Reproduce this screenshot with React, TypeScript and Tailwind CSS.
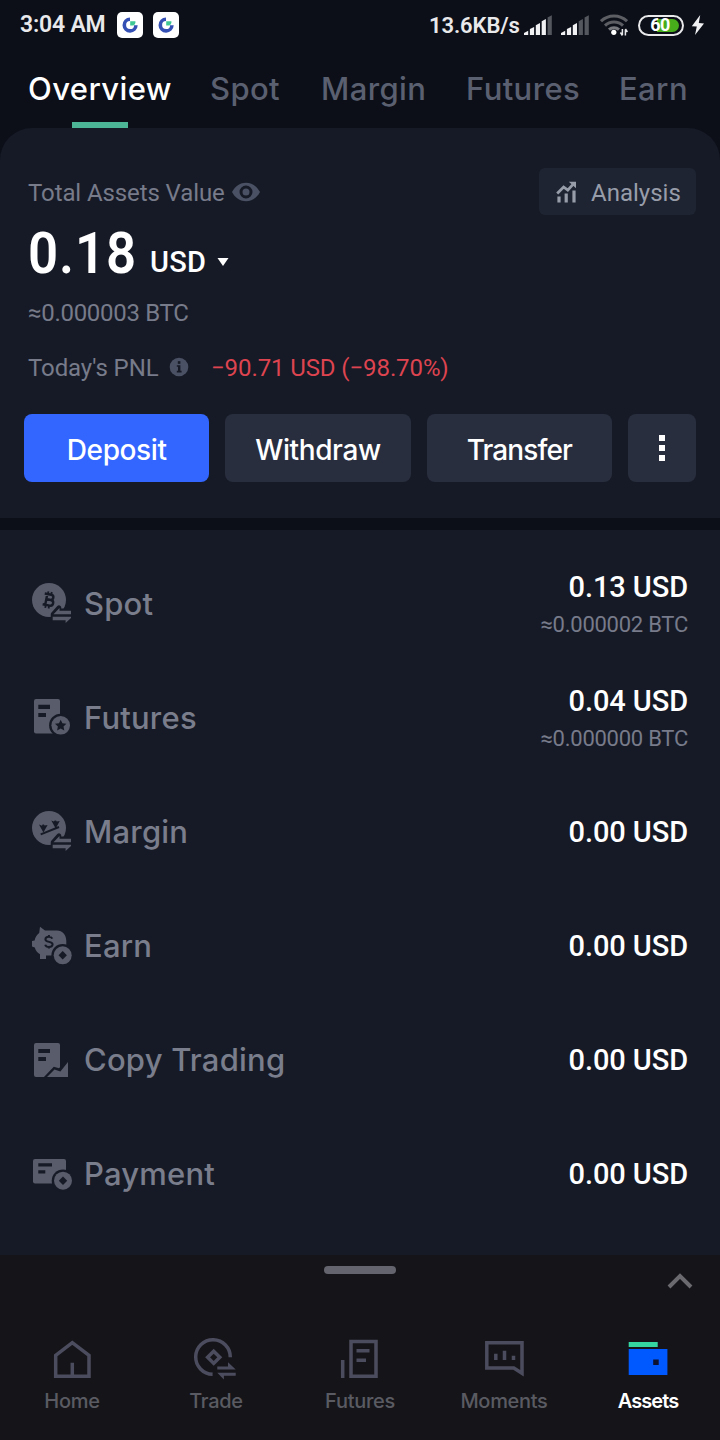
import React from 'react';

type IconProps = { children: React.ReactNode };

/* ---------- status bar ---------- */

const AppBadge: React.FC = () => (
  <svg viewBox="0 0 26 26" className="w-[26px] h-[26px] shrink-0">
    <rect width="26" height="26" rx="5" fill="#fff" />
    <path d="M13 7.3a5.8 5.8 0 1 0 5.900 5.900" fill="none" stroke="#3550b4" strokeWidth="3.600" />
    <path d="M13.200 9.200h5.200v1.200a3.600 3.600 0 0 1-3.400 3.200h-1.800z" fill="#3fc795" />
  </svg>
);

const Signal: React.FC<{ level: number }> = ({ level }) => (
  <svg viewBox="0 0 28 20" className="w-7 h-5 shrink-0">
    {[0, 1, 2, 3, 4].map((i) => (
      <path
        key={i}
        d={`M${i * 5.9} 20v${-(2 + i * 3.9)}l4.200 -2.200v${4.2 + i * 3.9}z`}
        fill={i < level ? '#f1f1f3' : '#55575e'}
      />
    ))}
  </svg>
);

const Wifi: React.FC = () => (
  <svg viewBox="0 0 28 24" className="w-7 h-6 shrink-0" fill="none">
    <path d="M1 8.200a19 19 0 0 1 26 0" stroke="#5c5e64" strokeWidth="3" />
    <path d="M5 12.600a13 13 0 0 1 18 0" stroke="#5c5e64" strokeWidth="3" />
    <path d="M9 16.600a7.400 7.400 0 0 1 10 0" stroke="#77797f" strokeWidth="3" />
    <circle cx="13.800" cy="19.300" r="2.600" fill="#fff" />
    <path d="M22.400 16v6M22.400 22.500l-2-3M25.400 22.500v-6M25.400 16l2 3" stroke="#e8e8ea" strokeWidth="1.500" />
  </svg>
);

const Battery: React.FC = () => (
  <div className="relative w-[46px] h-[21px] shrink-0 rounded-full border-2 border-[#e9e9eb] flex items-center justify-center">
    <div className="absolute right-[3px] top-[2px] bottom-[2px] w-[22px] rounded-r-full bg-[#47ad1b]" />
    <span className="relative -left-px font-bold text-[18px] leading-none tracking-[-0.5px] text-white">60</span>
  </div>
);

const Bolt: React.FC = () => (
  <svg viewBox="0 0 14 20" className="w-[14px] h-5 shrink-0">
    <path d="M9.200 0 .8 11.200l5 .4L4 20l9-11.600-5.200-.4z" fill="#f1f1f3" />
  </svg>
);

/* ---------- balances ---------- */

const Eye: React.FC = () => (
  <svg viewBox="0 0 28 20" className="w-7 h-5">
    <path d="M0 10C3.600 3.600 8.400.8 14 .8S24.400 3.600 28 10c-3.600 6.400-8.400 9.200-14 9.200S3.600 16.400 0 10z" fill="#4b5164" />
    <circle cx="14" cy="10" r="5" fill="none" stroke="#161a26" strokeWidth="3" />
  </svg>
);

const Info: React.FC = () => (
  <svg viewBox="0 0 20 20" className="w-5 h-5">
    <circle cx="10" cy="10" r="9.300" fill="#4b5164" />
    <rect x="8.800" y="4.200" width="2.600" height="2.600" fill="#161a26" />
    <path d="M7.800 8.200h3.600v5.600h1.200v1.600H7.800v-1.600h1.200v-4H7.800z" fill="#161a26" />
  </svg>
);

const AnalysisIcon: React.FC = () => (
  <svg viewBox="0 0 20 22" className="w-5 h-[22px]">
    <path d="M1.200 12.400 7.600 6l4.200 3.200L17 3.400" fill="none" stroke="#989daa" strokeWidth="2.800" />
    <path d="M12.800.8H20v6.400z" fill="#989daa" />
    <path d="M1.400 15.400h3.200v6H1.400zM8.600 12.400h3.200v9H8.600zM16.400 9.600h3.200v11.800h-3.200z" fill="#989daa" />
  </svg>
);

/* ---------- account rows ---------- */

const FG = '#585c6b';
const BG = '#161a26';

const SwapArrows: React.FC = () => (
  <>
    <path
      d="M21 32.300 27 25.600V28.700H39V38.300H21z"
      fill={BG}
      stroke={BG}
      strokeWidth="4.500"
      strokeLinejoin="round"
    />
    <path d="M21.500 32.300 27.500 26V28.700H39V32.300zM20.700 34.700H39V36l-5.400 5V38.300H20.700z" fill={FG} />
  </>
);

const DiamondBadge: React.FC<{ cx: number; cy: number }> = ({ cx, cy }) => (
  <g transform={`translate(${cx} ${cy})`}>
    <circle r="11.300" fill={BG} />
    <circle r="9" fill={FG} />
    <path d="M0-4.200 4.200 0 0 4.200-4.200 0z" fill={BG} />
  </g>
);

const RowSvg: React.FC<IconProps> = ({ children }) => (
  <svg viewBox="0 0 40 44" className="w-10 h-11 shrink-0">
    {children}
  </svg>
);

const SpotIcon: React.FC = () => (
  <RowSvg>
    <circle cx="17" cy="18" r="17" fill={FG} />
    <g fill="none" stroke={BG} strokeWidth="2.400" transform="rotate(11 17 18)">
      <path d="M11.600 12.400h6.600a2.500 2.500 0 0 1 0 5.200h-4.200M14 17.600h4.800a2.900 2.900 0 0 1 0 5.800H11.600M14.200 12.400v11" />
      <path d="M14.800 9.600v3M18.200 9.600v3M14.800 23.400v3M18.200 23.400v3" strokeWidth="1.800" />
    </g>
    <SwapArrows />
  </RowSvg>
);

const FuturesRowIcon: React.FC = () => (
  <RowSvg>
    <rect x="2" y="3" width="26" height="34.500" rx="2" fill={FG} />
    <path d="M6.300 8.700H18V13H6.300zM6.300 17H14v4H6.300z" fill={BG} />
    <circle cx="28.700" cy="29.300" r="11.600" fill={BG} />
    <circle cx="28.700" cy="29.300" r="9.300" fill={FG} />
    <path d="m28.700 23.700 1.700 3.600 4 .5-2.900 2.700.8 3.900-3.600-1.900-3.600 1.900.8-3.900-2.900-2.700 4-.5z" fill={BG} />
  </RowSvg>
);

const MarginIcon: React.FC = () => (
  <RowSvg>
    <circle cx="17" cy="18" r="17" fill={FG} />
    <path d="M8.700 24.400 27 17" stroke={BG} strokeWidth="2" />
    <path d="M7 14.600l3 1.200.6-1.200h1.200l.8 1 3-.6-4.200 7.400zM19.300 10.600l2.600 1 .8-1h1.300l.8 1 2.900-.6-4 7.400z" fill={BG} />
    <SwapArrows />
  </RowSvg>
);

const EarnIcon: React.FC = () => (
  <RowSvg>
    <path
      d="M8 2.700 13 6.600H25C30.500 6.600 34.300 11 34.300 17v6L24 31.500H14V35H8V30.200C5.400 28.800 3.600 26.600 2.800 23.400L0 22.400V17l2.600-.6C3.200 13.400 4.800 10.800 7.200 9z"
      fill={FG}
    />
    <path
      d="M20.300 14.700c-.6-1.400-1.800-1.900-3.500-1.900-2 0-3.400.9-3.400 2.500 0 3.600 7.200 1.600 7.200 5 0 1.700-1.500 2.600-3.600 2.600-2 0-3.300-.7-3.800-2.200M16.900 11v2M16.900 22.500v2"
      fill="none"
      stroke={BG}
      strokeWidth="2"
    />
    <DiamondBadge cx={30.7} cy={31.3} />
  </RowSvg>
);

const CopyTradingIcon: React.FC = () => (
  <RowSvg>
    <path d="M4 5H26a2 2 0 0 1 2 2V39H4a2 2 0 0 1-2-2V7a2 2 0 0 1 2-2z" fill={FG} />
    <path d="M6.300 11H18v4H6.300zM6.300 19H14v4H6.300z" fill={BG} />
    <path d="M11.500 39.500 21.800 28.700 27 30.300 36 20.500V40z" fill={BG} />
    <path d="M15 39 22.500 31.600 28.400 33.400 36 24V39z" fill={FG} />
  </RowSvg>
);

const PaymentIcon: React.FC = () => (
  <RowSvg>
    <rect x="1" y="7" width="33" height="24.500" rx="2" fill={FG} />
    <path d="M6.300 11.200H20v3.200H6.300zM6.300 18.200h7v3.200h-7z" fill={BG} />
    <DiamondBadge cx={31} cy={28.7} />
  </RowSvg>
);

/* ---------- bottom navigation ---------- */

const NavSvg: React.FC<IconProps> = ({ children }) => (
  <svg viewBox="0 0 48 48" className="w-12 h-12" fill="none" stroke="#4c4c5f" strokeWidth="3.500">
    {children}
  </svg>
);

const HomeIcon: React.FC = () => (
  <NavSvg>
    <path d="M7.700 19.300 24.300 6.700 41 19.300V40.300H7.700zM24.300 26.700V39" />
  </NavSvg>
);

const TradeIcon: React.FC = () => (
  <NavSvg>
    <path d="M38.300 21.300A17.300 17.300 0 1 0 20.600 38.300" />
    <path d="M21.700 15.200 27.800 21.300 21.700 27.400 15.600 21.300z" />
    <path d="M25.300 30.400H36V26.200l7.700 7.200H25.300zM25.300 36.700H43.700v3H31.900V43.400z" fill="#4c4c5f" stroke="none" />
  </NavSvg>
);

const FuturesNavIcon: React.FC = () => (
  <NavSvg>
    <path d="M6.700 24V42M15 5.500H40V40.200H15zM20.500 14.700H33.500M20.500 24.300H30" />
  </NavSvg>
);

const MomentsIcon: React.FC = () => (
  <NavSvg>
    <path d="M6.800 6.800H42V37.300L33.800 32H6.800zM15.800 17.700V24M24.500 14.700V24M33.500 19.700V24" />
  </NavSvg>
);

const AssetsIcon: React.FC = () => (
  <NavSvg>
    <g stroke="none">
      <rect x="4.700" y="6" width="29" height="5" fill="#35d6a0" />
      <rect x="4.700" y="13" width="38.700" height="26" fill="#0058ff" />
      <rect x="29.200" y="23.500" width="5.500" height="5.500" fill="#0c1230" />
    </g>
  </NavSvg>
);

const tabs = [
  { label: 'Spot', className: 'ml-[40px] w-[71px]' },
  { label: 'Margin', className: 'ml-[40px] w-[105px]' },
  { label: 'Futures', className: 'ml-[40px] w-[113px]' },
  { label: 'Earn', className: 'ml-[40px] w-[70px]' },
];

const accounts = [
  { name: 'Spot', icon: <SpotIcon />, value: '0.13 USD', btc: '≈0.000002 BTC' },
  { name: 'Futures', icon: <FuturesRowIcon />, value: '0.04 USD', btc: '≈0.000000 BTC' },
  { name: 'Margin', icon: <MarginIcon />, value: '0.00 USD' },
  { name: 'Earn', icon: <EarnIcon />, value: '0.00 USD' },
  { name: 'Copy Trading', icon: <CopyTradingIcon />, value: '0.00 USD' },
  { name: 'Payment', icon: <PaymentIcon />, value: '0.00 USD' },
];

const navItems = [
  { label: 'Home', icon: <HomeIcon /> },
  { label: 'Trade', icon: <TradeIcon /> },
  { label: 'Futures', icon: <FuturesNavIcon /> },
  { label: 'Moments', icon: <MomentsIcon /> },
  { label: 'Assets', icon: <AssetsIcon />, active: true },
];

const App: React.FC = () => {
  return (
    <div className="w-[720px] h-[1440px] overflow-hidden bg-[#0c0f18] font-['Roboto',sans-serif] flex flex-col whitespace-nowrap">
      {/* Status bar */}
      <div className="h-[50px] shrink-0 flex items-center pl-5 pr-[15px] text-[#e9e9eb]">
        <span className="w-[97px] pt-px text-[23px] font-semibold tracking-[-0.2px]">3:04 AM</span>
        <AppBadge />
        <div className="w-[10px]" />
        <AppBadge />
        <span className="ml-auto w-[95px] pt-px text-[22px] font-semibold tracking-[-0.1px]">13.6KB/s</span>
        <Signal level={4} />
        <div className="w-[9px]" />
        <Signal level={3} />
        <div className="w-[11px]" />
        <Wifi />
        <div className="w-[10px]" />
        <Battery />
        <div className="w-[7px]" />
        <Bolt />
      </div>

      {/* Account tabs */}
      <div className="h-[78px] shrink-0 flex pl-7 font-['Inter',sans-serif] text-[31px] leading-[78px] font-medium tracking-[0.4px] text-[#5b6071]">
        <div className="relative w-[142px] text-white">
          Overview
          <div className="absolute left-[44px] bottom-0 w-14 h-1.5 bg-[#4cb595]" />
        </div>
        {tabs.map((tab) => (
          <div key={tab.label} className={tab.className}>
            {tab.label}
          </div>
        ))}
      </div>

      {/* Balance card */}
      <div className="h-[390px] shrink-0 rounded-t-[32px] bg-[#161a26] px-6 pt-10">
        <div className="flex items-center justify-between h-[47px] pl-1">
          <div className="flex items-center gap-2 text-2xl text-[#777b8a]">
            <span className="w-[196px] pt-0.5 tracking-[-0.1px]">Total Assets Value</span>
            <Eye />
          </div>
          <div className="w-[157px] h-[47px] rounded-md bg-[#1f2432] flex items-center pl-[17px] gap-[15px] text-2xl text-[#989daa]">
            <AnalysisIcon />
            <span className="pt-0.5">Analysis</span>
          </div>
        </div>

        <div className="flex items-baseline pl-1 h-[74px] text-white">
          <div className="w-[122px]">
            <span className="inline-block origin-left scale-x-[0.91] text-[58px] leading-[76px] font-semibold tracking-[1px]">
              0.18
            </span>
          </div>
          <span className="relative -top-px w-[67px] text-[29px] font-medium tracking-[0.2px]">USD</span>
          <svg viewBox="0 0 12 8" className="w-3 h-2 self-center mt-[20px]">
            <path d="M.5 0h11L6 8z" fill="#fff" />
          </svg>
        </div>

        <div className="pl-1 h-[46px] leading-[48px] text-2xl tracking-[-0.3px] text-[#777b8a]">≈0.000003 BTC</div>

        <div className="pl-1 h-16 flex items-center text-2xl tracking-[-0.1px] text-[#777b8a]">
          <span className="w-[141px] pt-0.5">Today's PNL</span>
          <Info />
          <span className="ml-[22px] pt-0.5 text-[#dd4450]">−90.71 USD (−98.70%)</span>
        </div>

        <div className="mt-[15px] flex gap-4 font-['Inter',sans-serif] text-[28px] font-medium tracking-[-0.4px] text-white">
          <button className="flex-1 h-[68px] pt-[3px] rounded-lg bg-[#3366ff]">Deposit</button>
          <button className="flex-1 h-[68px] pt-[3px] rounded-lg bg-[#292e3f]">Withdraw</button>
          <button className="flex-1 h-[68px] pt-[3px] rounded-lg bg-[#292e3f] tracking-[-0.9px]">Transfer</button>
          <button className="w-[68px] h-[68px] rounded-lg bg-[#292e3f] flex flex-col items-center justify-center gap-1">
            <i className="w-1.5 h-1.5 bg-white" />
            <i className="w-1.5 h-1.5 bg-white" />
            <i className="w-1.5 h-1.5 bg-white" />
          </button>
        </div>
      </div>

      {/* Account list */}
      <div className="mt-3 h-[725px] shrink-0 bg-[#161a26] pt-[17px] pl-8 pr-8">
        {accounts.map((account) => (
          <div key={account.name} className="h-[114px] flex items-center">
            {account.icon}
            <span className="ml-3 font-['Inter',sans-serif] text-[31px] font-medium tracking-[0.2px] text-[#7a7e8c]">
              {account.name}
            </span>
            <div className="ml-auto text-right">
              <div className="h-10 leading-10 text-[29px] font-medium tracking-[-0.1px] text-white">{account.value}</div>
              {account.btc && (
                <div className="h-[34px] leading-[36px] text-[22px] tracking-[-0.25px] text-[#777b8a]">{account.btc}</div>
              )}
            </div>
          </div>
        ))}
      </div>

      {/* Bottom navigation */}
      <div className="relative h-[185px] shrink-0 bg-[#151519] pt-[11px]">
        <div className="mx-auto w-[72px] h-2 rounded-full bg-[#64646e]" />
        <svg viewBox="0 0 26 18" className="absolute right-[27px] top-[17px] w-[26px] h-[18px]">
          <path d="M2 15 13 4l11 11" fill="none" stroke="#6a6a6f" strokeWidth="4" />
        </svg>
        <div className="mt-[62px] grid grid-cols-5">
          {navItems.map((item) => (
            <div key={item.label} className="flex flex-col items-center">
              {item.icon}
              <span
                className={`h-[34px] leading-[34px] font-['Inter',sans-serif] text-[20px] ${
                  item.active ? 'font-semibold tracking-[-0.9px] text-white' : 'font-medium tracking-[-0.3px] text-[#5a5b62]'
                }`}
              >
                {item.label}
              </span>
            </div>
          ))}
        </div>
      </div>
    </div>
  );
};

export default App;
